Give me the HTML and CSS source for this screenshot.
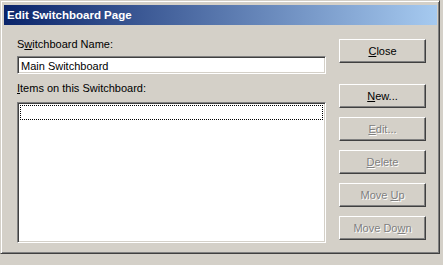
FILE: index.html
```html
<!DOCTYPE html>
<html lang="en">
<head>
    <meta charset="UTF-8">
    <title>Edit Switchboard Page</title>
    <link rel="stylesheet" href="styles.css">
</head>
<body>
    <div class="window">
        <div class="titlebar">Edit Switchboard Page</div>
        <div class="content">
            <div class="left">
                <label class="label" for="sb-name">S<u>w</u>itchboard Name:</label>
                <input type="text" id="sb-name" class="textbox" value="Main Switchboard">
                <div class="label label-items"><u>I</u>tems on this Switchboard:</div>
                <div class="listbox">
                    <div class="focus-row"></div>
                </div>
            </div>
            <div class="right">
                <button class="btn btn-close"><u>C</u>lose</button>
                <button class="btn btn-new"><u>N</u>ew...</button>
                <button class="btn" disabled><u>E</u>dit...</button>
                <button class="btn" disabled><u>D</u>elete</button>
                <button class="btn" disabled>Move <u>U</u>p</button>
                <button class="btn" disabled>Move Do<u>w</u>n</button>
            </div>
        </div>
    </div>
</body>
</html>
```

FILE: styles.css
```css
body {
    margin: 0;
    padding: 0;
    background: #d4d0c8;
    font-family: "Liberation Sans", Arial, sans-serif;
    font-size: 11px;
    color: #000;
    width: 443px;
    height: 265px;
    overflow: hidden;
}
.window {
    width: 440px;
    height: 254px;
    box-sizing: border-box;
    background: #d4d0c8;
    border-top: 1px solid #d4d0c8;
    border-left: 1px solid #d4d0c8;
    border-right: 1px solid #404040;
    border-bottom: 1px solid #404040;
    box-shadow: inset 1px 1px 0 #fff, inset -1px -1px 0 #808080;
    padding: 4px 2px 0 3px;
}
.titlebar {
    height: 20px;
    line-height: 20px;
    padding-left: 3px;
    background: linear-gradient(to right, #0a246a, #a6caf0);
    color: #fff;
    font-weight: bold;
    font-size: 11.5px;
}
.content {
    display: flex;
    justify-content: space-between;
}
.left {
    width: 309px;
    padding: 12px 0 0 13px;
    display: flex;
    flex-direction: column;
}
.label {
    display: block;
    line-height: 14px;
    height: 14px;
}
.label-items {
    margin-top: 7px;
}
.textbox {
    margin: 5px 0 0 0;
    width: 309px;
    height: 18px;
    box-sizing: border-box;
    padding: 1px 3px 0;
    font-family: "Liberation Sans", Arial, sans-serif;
    font-size: 11px;
    color: #000;
    background: #fff;
    border-top: 1px solid #808080;
    border-left: 1px solid #808080;
    border-right: 1px solid #fff;
    border-bottom: 1px solid #fff;
    box-shadow: inset 1px 1px 0 #404040, inset -1px -1px 0 #d4d0c8;
    outline: none;
}
.listbox {
    margin-top: 7px;
    width: 309px;
    height: 141px;
    box-sizing: border-box;
    padding: 2px;
    background: #fff;
    border-top: 1px solid #808080;
    border-left: 1px solid #808080;
    border-right: 1px solid #fff;
    border-bottom: 1px solid #fff;
    box-shadow: inset 1px 1px 0 #404040, inset -1px -1px 0 #d4d0c8;
}
.focus-row {
    height: 15px;
    box-sizing: border-box;
    border: 1px dotted #000;
}
.right {
    width: 87px;
    padding: 14px 11px 0 0;
    display: flex;
    flex-direction: column;
    gap: 9px;
}
.btn {
    width: 87px;
    height: 24px;
    padding: 0;
    margin: 0;
    background: #d4d0c8;
    font-family: "Liberation Sans", Arial, sans-serif;
    font-size: 11px;
    color: #000;
    border-top: 1px solid #fff;
    border-left: 1px solid #fff;
    border-right: 1px solid #404040;
    border-bottom: 1px solid #404040;
    box-shadow: inset -1px -1px 0 #808080;
    cursor: default;
}
.btn-new {
    margin-top: 12px;
}
.btn:disabled {
    color: #808080;
    text-shadow: 1px 1px 0 #fff;
}
```
